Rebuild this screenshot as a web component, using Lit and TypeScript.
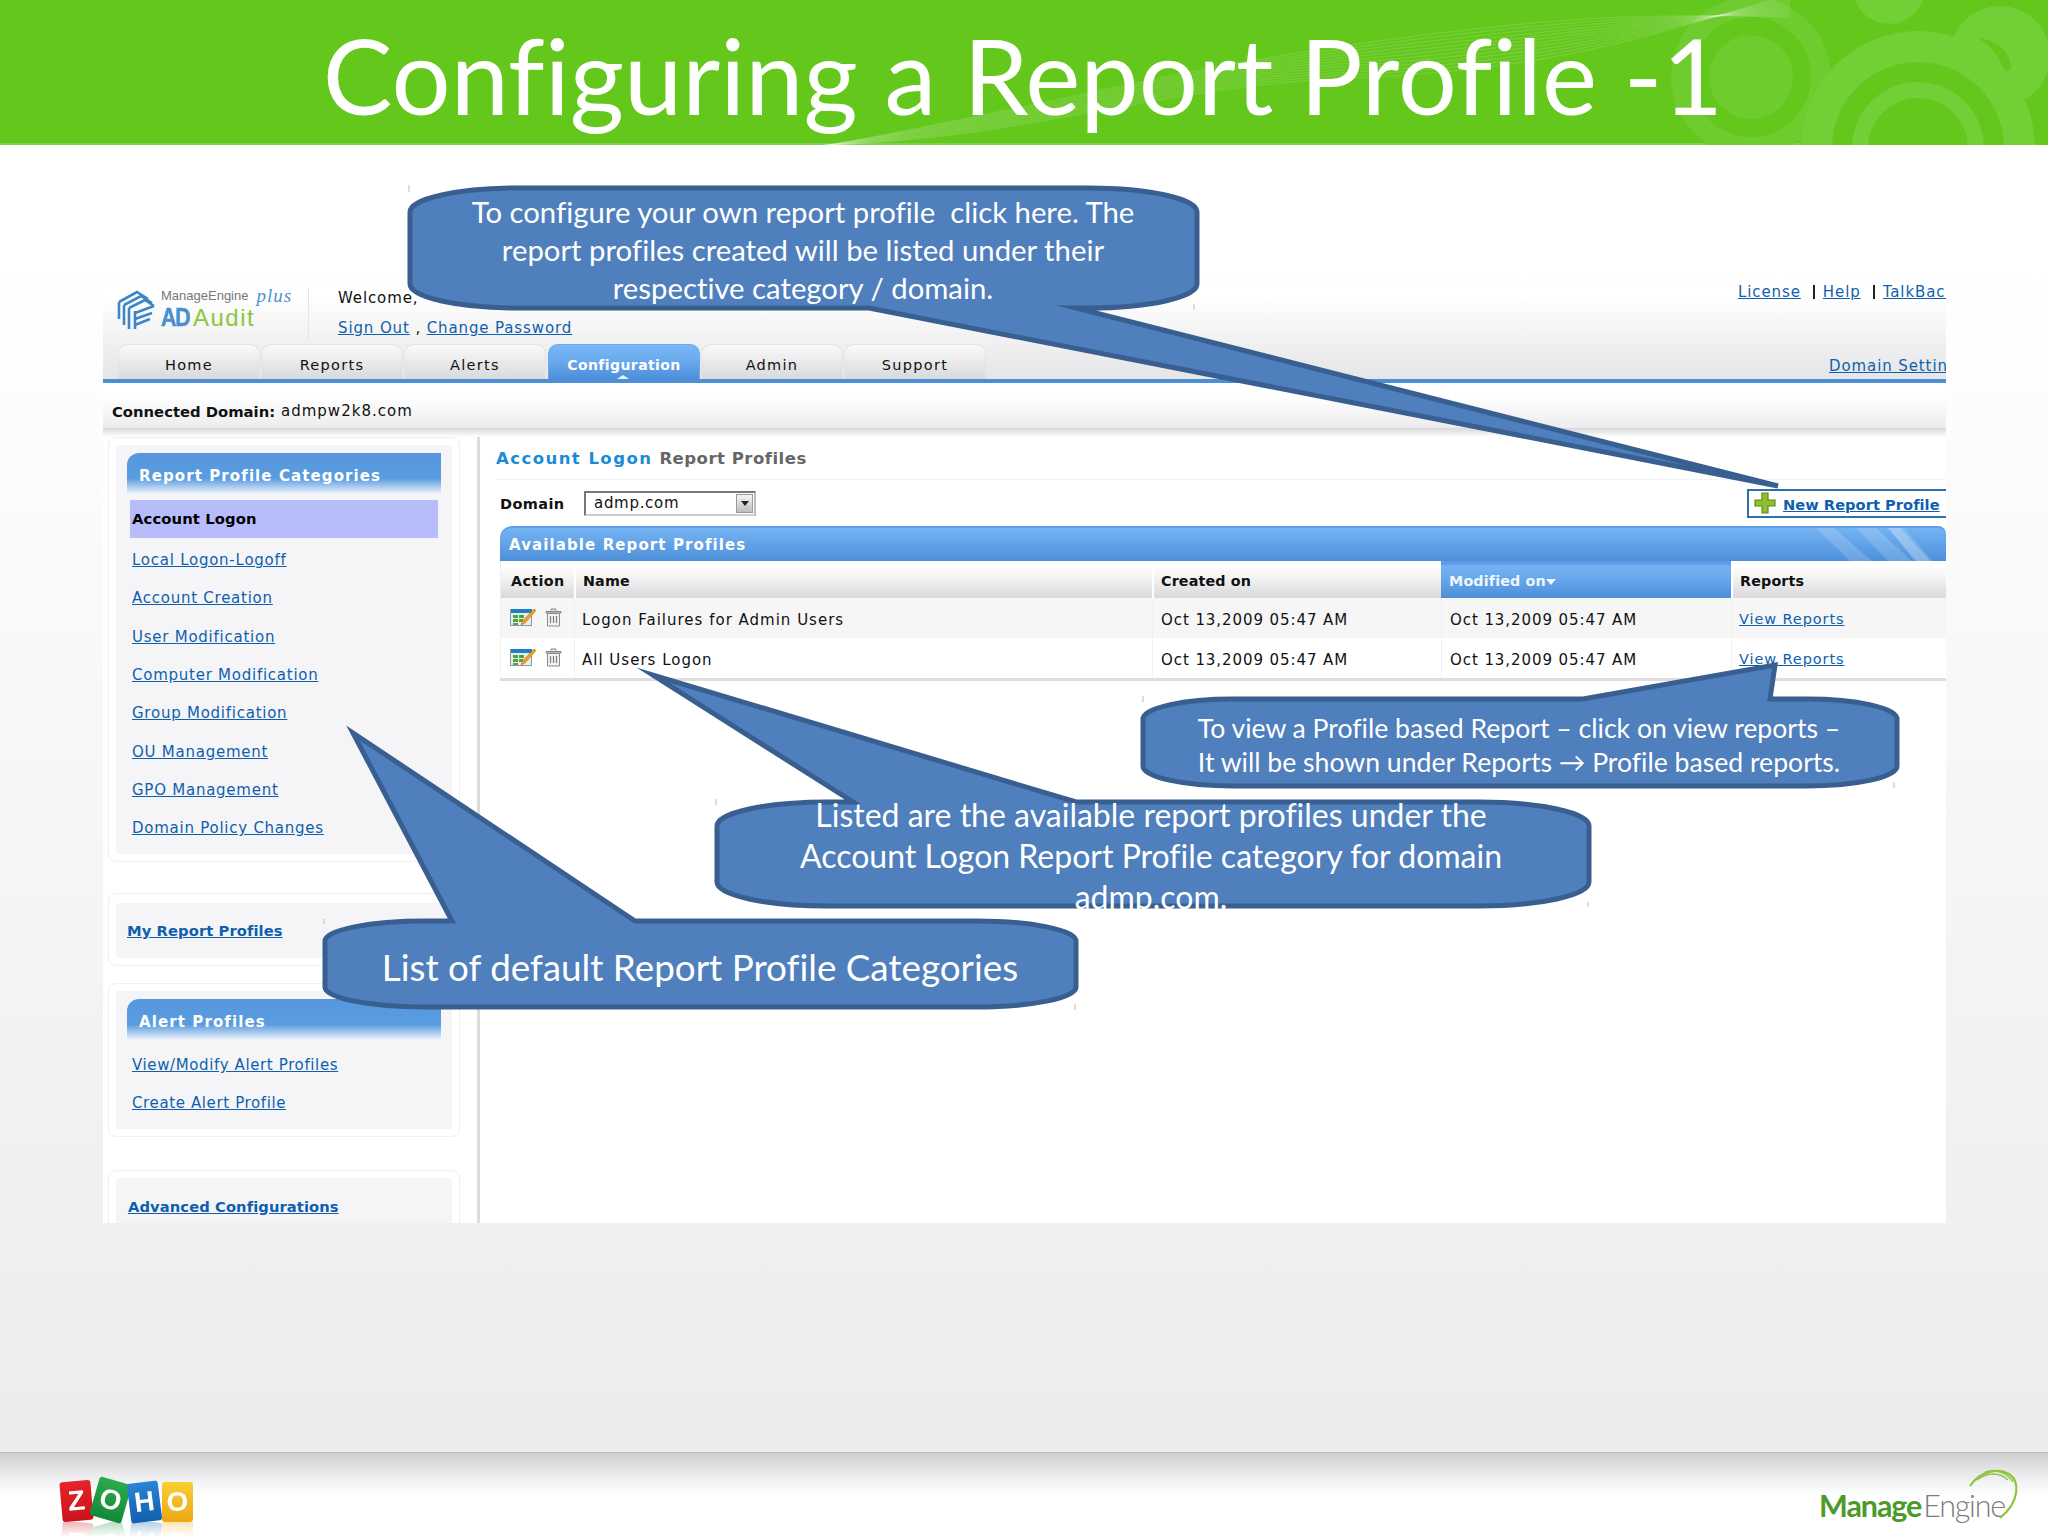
import { LitElement, html, css, svg } from "lit";
import { customElement } from "lit/decorators.js";

type Tail = { edge: "top" | "bottom"; a: number; b: number; tx: number; ty: number };
type Box = { x: number; y: number; w: number; h: number; rx: number; ry: number; tail: Tail; ticks: number[][] };

const CALLOUTS: Box[] = [
  { x: 410, y: 188, w: 787, h: 120, rx: 108, ry: 24, tail: { edge: "bottom", a: 1076, b: 869, tx: 1778, ty: 486 }, ticks: [[409, 185, 192], [1194, 304, 310]] },
  { x: 1143, y: 699, w: 754, h: 87, rx: 90, ry: 20, tail: { edge: "top", a: 1583, b: 1770, tx: 1775, ty: 665 }, ticks: [[1143, 696, 702], [1894, 782, 788]] },
  { x: 717, y: 802, w: 872, h: 104, rx: 110, ry: 24, tail: { edge: "top", a: 853, b: 1076, tx: 653, ty: 675 }, ticks: [[716, 799, 805], [1588, 902, 907]] },
  { x: 325, y: 921, w: 751, h: 86, rx: 100, ry: 20, tail: { edge: "top", a: 452, b: 635, tx: 353, ty: 733 }, ticks: [[324, 919, 924], [1075, 1004, 1010]] },
];

function calloutPath(c: Box): string {
  const { x, y, w, h, rx, ry, tail: t } = c;
  const r = x + w, b = y + h;
  const top = t.edge === "top" ? `L${t.a} ${y} L${t.tx} ${t.ty} L${t.b} ${y} ` : "";
  const bottom = t.edge === "bottom" ? `L${t.a} ${b} L${t.tx} ${t.ty} L${t.b} ${b} ` : "";
  return `M${x} ${y + ry} A${rx} ${ry} 0 0 1 ${x + rx} ${y} ${top}L${r - rx} ${y} A${rx} ${ry} 0 0 1 ${r} ${y + ry} L${r} ${b - ry} A${rx} ${ry} 0 0 1 ${r - rx} ${b} ${bottom}L${x + rx} ${b} A${rx} ${ry} 0 0 1 ${x} ${b - ry} Z`;
}

const TABS = ["Home", "Reports", "Alerts", "Configuration", "Admin", "Support"];
const CATEGORIES = ["Local Logon-Logoff", "Account Creation", "User Modification", "Computer Modification", "Group Modification", "OU Management", "GPO Management", "Domain Policy Changes"];
const ROWS = ["Logon Failures for Admin Users", "All Users Logon"];
const STAMP = "Oct 13,2009 05:47 AM";

const editIcon = svg`<svg class="ic" width="26" height="19" viewBox="0 0 26 19"><rect x=".5" y="1.5" width="21" height="16" fill="#e8eef0" stroke="#8a9aa5"/><rect x="1" y="1" width="21" height="4" fill="#1f7fc4"/><path d="M3 7h5v3H3zM9 7h5v3H9zM3 11h5v3H3zM9 11h4v3H9zM3 15h5v2H3z" fill="#4fa43c"/><path d="M24 1l2 1.500L15 15l-4 2 1.500-4z" fill="#f0a020" stroke="#b86f10" stroke-width=".6"/></svg>`;
const trashIcon = svg`<svg class="ic" width="17" height="19" viewBox="0 0 17 19"><path d="M6 2.500V1h5v1.500M1 3.500h15v1.500H1z" fill="#d8d8d8" stroke="#888" stroke-width="1"/><path d="M2.500 5.500h12V18h-12z" fill="#f2f2f2" stroke="#8b8b8b"/><path d="M5.500 8v7M8.500 8v7M11.500 8v7" stroke="#7d7d7d" stroke-width="1.200"/></svg>`;

@customElement("app-root")
export class AppRoot extends LitElement {
  static styles = css`
    :host { display: block; width: 2048px; height: 1536px; position: relative; overflow: hidden; font-family: "DejaVu Sans", sans-serif; color: #111; background: #fff; }
    a { color: #0f5fae; text-decoration: underline; }
    .slide { display: flex; flex-direction: column; height: 1536px; }

    .banner { height: 145px; background: #63c71c; position: relative; overflow: hidden; display: flex; justify-content: center; flex: none; box-shadow: inset 0 -2px 0 #7fcf4a; }
    .banner svg { position: absolute; left: 0; top: 0; }
    .banner h1 { position: relative; margin: 0 0 0 -2px; font: 400 104.400px/150px Lato, sans-serif; font-variant-ligatures: none; color: #fff; white-space: nowrap; }

    .mid { flex: 1; padding-top: 140px; background: linear-gradient(#fff 0%, #fff 10%, #ecebee 100%); min-height: 0; }
    .app { margin-left: 103px; width: 1843px; height: 938px; background: #fff; display: flex; flex-direction: column; overflow: hidden; font-size: 15px; letter-spacing: 1px; }
    .chrome { background: linear-gradient(#fff 12%, #e5e5e7 100%); flex: none; }
    .top { height: 59px; display: flex; }
    .logo { width: 191px; margin-left: 14px; height: 52px; margin-top: 3px; border-right: 1px solid #e6e6e6; display: flex; gap: 6px; flex: none; }
    .logo svg { margin-top: 2px; flex: none; }
    .lg-text { display: flex; flex-direction: column; font-family: "Liberation Sans", sans-serif; letter-spacing: 0; margin-top: -3px; }
    .lg-l1 { display: flex; height: 21px; font-size: 13px; color: #777; align-items: center; gap: 8px; white-space: nowrap; }
    .lg-plus { font: italic 19px/21px "Liberation Serif", serif; color: #4a93d6; letter-spacing: 1px; }
    .lg-l2 { display: flex; align-items: center; gap: 7px; font-size: 24px; height: 23px; color: #8cc63f; letter-spacing: 1.500px; }
    .lg-l2 b { color: #4a8fd0; font-size: 25px; font-weight: 700; letter-spacing: -1.500px; width: 25px; display: block; transform: scaleX(.86); transform-origin: left; -webkit-text-stroke: .5px #4a8fd0; }
    .welcome { margin-left: 29px; display: flex; flex-direction: column; gap: 12px; padding-top: 4px; line-height: 18px; letter-spacing: .88px; }
    .toplinks { margin-left: auto; width: 208px; white-space: nowrap; line-height: 14px; height: 16px; display: flex; gap: 8px; letter-spacing: .9px; }
    .toplinks span { border-left: 2px solid #222; height: 14px; margin-left: 4px; }
    .clip { flex: 1; min-width: 0; overflow: hidden; }

    .tabs { display: flex; height: 35px; padding-left: 15px; align-items: flex-end; }
    .tab { width: 142px; height: 35px; margin-right: 1px; padding-top: 5px; box-sizing: border-box; border: 1px solid #e4e4e4; border-bottom: 0; border-radius: 10px 10px 0 0; background: linear-gradient(#fafafa, #f0f0f0 30%, #d9d9db); display: flex; align-items: center; justify-content: center; font-size: 14.500px; letter-spacing: 1.300px; }
    .tab.on { width: 152px; margin-left: 1px; background: linear-gradient(#7ab8f6, #6aaaee 45%, #4c8edb); color: #fff; font-weight: 700; font-size: 14px; letter-spacing: .4px; border-color: #6aa9ea; position: relative; }
    .tab.on::after { content: ""; position: absolute; left: 62px; bottom: -4px; border: 12px solid transparent; border-top: 0; border-bottom: 8px solid #f4f4f6; }
    .domset { margin-left: auto; width: 117px; overflow: hidden; white-space: nowrap; align-self: center; margin-top: 8px; height: 18px; line-height: 18px; letter-spacing: .9px; }
    .blueline { height: 4px; background: #4c8fd8; flex: none; position: relative; }
    .connected { height: 45px; padding-top: 11px; box-sizing: border-box; flex: none; background: linear-gradient(#fff 30%, #ececee 100%); display: flex; align-items: center; padding-left: 9px; font-size: 15px; letter-spacing: 1.020px; white-space: pre; }
    .connected b { letter-spacing: 0; font-size: 14.800px; }
    .shadow { height: 9px; background: linear-gradient(#d8d8da, #fff); flex: none; }

    .body { flex: 1; display: flex; min-height: 0; overflow: hidden; }
    .side { width: 374px; flex: none; padding-left: 5px; box-sizing: border-box; display: flex; flex-direction: column; }
    .panel { width: 352px; box-sizing: border-box; border: 1px solid #efefef; border-radius: 8px; padding: 7px; flex: none; }
    .inner { background: #f5f5f7; height: 100%; box-sizing: border-box; border-radius: 4px; }
    .p1 { height: 425px; }
    .p1 .inner { padding-top: 8px; }
    .p2 { height: 73px; margin-top: 31px; padding: 9px 7px 7px; }
    .p3 { height: 154px; margin-top: 17px; }
    .p3 .inner { padding-top: 8px; }
    .p4 { height: 120px; margin-top: 33px; }
    .boldlink { display: flex; align-items: center; padding-left: 12px; font-weight: 700; font-size: 14.700px; letter-spacing: .1px; }
    .p2 .boldlink { padding-left: 11px; }
    .p4 .boldlink { height: 56px; }
    .shead { margin-left: 11px; width: 314px; height: 41px; border-radius: 12px 0 0 0; background: linear-gradient(#5697dd 0%, #5a9ce0 62%, #f0f5fb 100%); color: #fff; font-weight: 700; display: flex; align-items: center; padding: 4px 0 0 12px; box-sizing: border-box; font-size: 15px; letter-spacing: 1.100px; }
    .sel { margin: 6px 0 0 14px; width: 308px; height: 38px; padding: 0 0 2px 2px; background: #b7bcfb; font-weight: 700; font-size: 14.800px; letter-spacing: .1px; display: flex; align-items: center; box-sizing: border-box; color: #000; }
    .links { margin-top: 3px; display: flex; flex-direction: column; letter-spacing: .75px; }
    .links a { height: 38.300px; display: flex; align-items: center; padding-left: 16px; }
    .p3 .links { margin-top: 6px; letter-spacing: .62px; }

    .vline { width: 3px; background: #dcdcde; flex: none; margin-right: 16px; }
    .main { flex: 1; min-width: 0; }
    .title { height: 43px; box-sizing: border-box; border-bottom: 1px solid #f2f2f2; display: flex; align-items: center; font-weight: 700; font-size: 16.500px; letter-spacing: .5px; gap: 7px; color: #666; padding-top: 1px; white-space: nowrap; }
    .title span { color: #1b8bd8; letter-spacing: 1.450px; }
    .domrow { height: 46px; margin-left: 4px; display: flex; align-items: center; position: relative; }
    .domlabel { width: 84px; font-weight: 700; font-size: 14.500px; letter-spacing: .4px; padding-top: 2px; }
    .select { width: 172px; height: 25px; padding-top: 0; box-sizing: border-box; border: 2px solid #777; border-right-color: #bbb; border-bottom-color: #ccc; display: flex; align-items: center; padding-left: 8px; font-size: 15px; letter-spacing: .7px; line-height: 24px; justify-content: space-between; background: #fff; }
    .arrow { width: 17px; height: 19px; background: linear-gradient(#f5f5f5, #bdbdbd); border: 1px solid #999; box-sizing: border-box; display: flex; align-items: center; justify-content: center; margin-right: 1px; }
    .arrow i { border: 4px solid transparent; border-top: 5px solid #222; border-bottom: 0; }
    .newbtn { margin-left: auto; width: 199px; height: 29px; box-sizing: border-box; border: 2px solid #2f6fad; border-right: 0; display: flex; align-items: center; gap: 7px; padding-left: 5px; font-weight: 700; font-size: 14.600px; letter-spacing: .05px; white-space: nowrap; }
    .newbtn a { padding-top: 2px; }

    .tbl { margin-left: 4px; }
    .tbar { height: 35px; box-sizing: border-box; border-top: 2px solid #5f9de4; border-radius: 12px 8px 0 0; background: linear-gradient(#74b3f3, #4e90da); color: #fff; font-weight: 700; font-size: 15px; letter-spacing: 1.100px; display: flex; align-items: center; padding-left: 9px; position: relative; overflow: hidden; }
    .tbar svg { position: absolute; right: 0; top: 0; }
    .grid { display: grid; grid-template-columns: 74px 578px 289px 290px 1fr; }
    .c { display: flex; align-items: center; padding-left: 7px; border-left: 1px solid #f0f0f0; min-width: 0; white-space: nowrap; box-sizing: border-box; }
    .c:first-child { border-left: 1px solid #eee; }
    .h { height: 37px; padding-top: 2px; background: linear-gradient(#fff 10%, #f3f3f4 45%, #d9d9db); font-weight: 700; font-size: 14.300px; letter-spacing: .15px; border-left: 2px solid #fff; }
    .h:first-child { padding-left: 10px; letter-spacing: .4px; }
    .h.sorted { background: linear-gradient(#5f9be6 0, #5f9be6 3px, #74b2f3 5px, #68a8ec 45%, #4d8ed9); color: #eef6ff; border-left: 0; padding-left: 8px; }
    .sorted i { border: 5px solid transparent; border-top: 6px solid #eef6ff; border-bottom: 0; margin-top: 2px; }
    .d { height: 40px; padding-top: 3px; font-size: 15px; letter-spacing: 1px; }
    .odd { background: #f6f6f7; }
    .acts { gap: 9px; padding: 0 0 2px 9px; }
    .ic { flex: none; }
    .date { letter-spacing: .92px; padding-left: 8px; }
    .vr { font-size: 14.500px; letter-spacing: .9px; padding-top: 2px; }
    .tend { height: 3px; background: #dedee0; }

    .foot { height: 84px; flex: none; border-top: 1px solid #bdbdc0; box-sizing: border-box; background: linear-gradient(#cfcfd1 0, #ecebee 22px, #fff 42px); display: flex; justify-content: space-between; position: relative; }
    .zoho { display: flex; margin: 26px 0 0 61px; gap: 2px; height: 42px; -webkit-box-reflect: below 1px linear-gradient(transparent 62%, rgba(255,255,255,.3)); }
    .z { width: 31px; height: 40px; border-radius: 3px; display: flex; align-items: center; justify-content: center; color: #fff; font: 700 28px "Liberation Sans", sans-serif; letter-spacing: 0; }
    .z1 { background: linear-gradient(#e6232a, #c8141c); transform: rotate(-5deg); margin-top: 2px; }
    .z2 { background: linear-gradient(#2ea94d, #12893a); transform: rotate(16deg); width: 33px; margin-top: 1px; }
    .z3 { background: linear-gradient(#2a84d6, #1160ad); transform: rotate(-7deg); margin-top: 3px; }
    .z4 { background: linear-gradient(#f8cf33, #eda714); margin-top: 3px; }
    .me { position: relative; margin: 29px 43px 0 0; height: 46px; display: flex; align-items: flex-end; white-space: nowrap; font-family: Lato, sans-serif; font-size: 30.500px; line-height: 46px; }
    .me b { color: #4c9a2a; letter-spacing: -1.100px; font-weight: 700; }
    .me span { color: #7b7b7b; font-weight: 300; letter-spacing: -1.200px; margin-left: 2px; }
    .me svg { position: absolute; right: -16px; top: -16px; }

    .overlay { position: absolute; left: 0; top: 0; pointer-events: none; }
    .ct { position: absolute; color: #fff; font-family: Lato, sans-serif; font-variant-ligatures: none; text-align: center; white-space: pre; }
    .ct1 { left: 408px; top: 193px; width: 790px; font-size: 29.300px; line-height: 37.800px; }
    .ct2 { left: 1143px; top: 711px; width: 752px; font-size: 26.600px; line-height: 34px; }
    .ct3 { left: 716px; top: 794px; width: 870px; font-size: 32px; line-height: 41px; }
    .ct4 { left: 325px; top: 944px; width: 750px; font-size: 36.800px; line-height: 46px; }
  `;

  private banner() {
    const c = "#73cf36";
    const g = "#63c71c";
    return svg`<svg width="2048" height="145" viewBox="0 0 2048 145">
      <circle cx="1751" cy="77" r="80" fill="#6ecc2e"/>
      <circle cx="1751" cy="77" r="60" fill="${g}"/>
      <circle cx="1751" cy="77" r="42" fill="#6ecc2e"/>
      <g fill="none" stroke="#fff" stroke-opacity=".12" stroke-width="1.500">
        ${[0, 1, 2, 3, 4, 5, 6, 7, 8, 9, 10, 11].map((i) => svg`<path d="M760 ${146 + i} C1000 ${150 - i * 3} 1150 ${85 - i} 1350 ${78 - i * 3} S1650 ${35 - i * 2} 1790 ${-5 + i * 2}"/>`)}
      </g>
      <circle cx="1889" cy="-12" r="36" fill="${c}"/>
      <circle cx="2000" cy="56" r="50" fill="${c}"/>
      <path d="M1977 38a36 30 0 0 1 34 30l-6 6q-6-24-28-36z" fill="${g}"/>
      <circle cx="1918" cy="148" r="117" fill="${c}"/>
      <circle cx="1918" cy="148" r="86" fill="${g}"/>
      <circle cx="1918" cy="148" r="66" fill="${c}"/>
      <circle cx="1918" cy="148" r="50" fill="${g}"/>
      <path d="M2030 105l30 25v20h-24q0-25-6-45z" fill="${g}"/>
    </svg>`;
  }

  private overlay() {
    return svg`<svg class="overlay" width="2048" height="1536" viewBox="0 0 2048 1536">
      ${CALLOUTS.map((c) => svg`<path d="${calloutPath(c)}" fill="#4f7fbc" stroke="#385f90" stroke-width="5" stroke-linejoin="miter" stroke-miterlimit="12"/>`)}
      ${CALLOUTS.flatMap((c) => c.ticks.map((t) => svg`<path d="M${t[0]} ${t[1]}V${t[2]}" stroke="#bbb" stroke-width="1"/>`))}
    </svg>`;
  }

  render() {
    return html`<div class="slide">
      <div class="banner">${this.banner()}<h1>Configuring a Report Profile -1</h1></div>
      <div class="mid">
        <div class="app">
          <div class="chrome">
            <div class="top">
              <div class="logo">
                <svg width="38" height="40" viewBox="0 0 38 40" fill="none" stroke="#3c86c8" stroke-width="2.600">
                  <path d="M2 12L20 2l11 7M7 15L24 6l11 7M12 18L28 10l9 6"/>
                  <path d="M2 12v17M7 15v20M12 18v21"/>
                  <path d="M18 23l19-7M18 29l17-6M18 35l15-6M18 21v18"/>
                </svg>
                <div class="lg-text">
                  <div class="lg-l1">ManageEngine <span class="lg-plus">plus</span></div>
                  <div class="lg-l2"><b>AD</b>Audit</div>
                </div>
              </div>
              <div class="welcome"><div>Welcome,</div><div><a>Sign Out</a> , <a>Change Password</a></div></div>
              <div class="toplinks"><a>License</a><span></span><a>Help</a><span></span><div class="clip"><a>TalkBack</a></div></div>
            </div>
            <div class="tabs">
              ${TABS.map((t) => html`<div class="tab ${t === "Configuration" ? "on" : ""}">${t}</div>`)}
              <a class="domset">Domain Settings</a>
            </div>
          </div>
          <div class="blueline"></div>
          <div class="connected"><b>Connected Domain:</b> admpw2k8.com</div>
          <div class="shadow"></div>
          <div class="body">
            <div class="side">
              <div class="panel p1"><div class="inner">
                <div class="shead">Report Profile Categories</div>
                <div class="sel">Account Logon</div>
                <div class="links">${CATEGORIES.map((c) => html`<a>${c}</a>`)}</div>
              </div></div>
              <div class="panel p2"><div class="inner boldlink"><a>My Report Profiles</a></div></div>
              <div class="panel p3"><div class="inner">
                <div class="shead">Alert Profiles</div>
                <div class="links"><a>View/Modify Alert Profiles</a><a>Create Alert Profile</a></div>
              </div></div>
              <div class="panel p4"><div class="inner boldlink"><a>Advanced Configurations</a></div></div>
            </div>
            <div class="vline"></div>
            <div class="main">
              <div class="title"><span>Account Logon</span> Report Profiles</div>
              <div class="domrow">
                <div class="domlabel">Domain</div>
                <div class="select">admp.com<div class="arrow"><i></i></div></div>
                <div class="newbtn">
                  <svg width="22" height="22" viewBox="0 0 22 22"><path d="M8 1h6v7h7v6h-7v7H8v-7H1V8h7z" fill="#8fc02f" stroke="#5c8a1e" stroke-width="1.200"/></svg>
                  <a>New Report Profile</a>
                </div>
              </div>
              <div class="tbl">
                <div class="tbar">Available Report Profiles
                  <svg width="130" height="35" viewBox="0 0 130 35"><path d="M0 0h18l40 35H36zM40 0h20l38 35H74zM72 0h16l30 35h-18z" fill="#fff" opacity=".16"/><path d="M72 0h12l32 35h-14z" fill="#fff" opacity=".2"/></svg>
                </div>
                <div class="grid">
                  <div class="c h">Action</div><div class="c h">Name</div><div class="c h">Created on</div>
                  <div class="c h sorted">Modified on<i></i></div><div class="c h">Reports</div>
                  ${ROWS.map((r, i) => html`
                    <div class="c d acts ${i === 0 ? "odd" : ""}">${editIcon}${trashIcon}</div>
                    <div class="c d ${i === 0 ? "odd" : ""}">${r}</div>
                    <div class="c d date ${i === 0 ? "odd" : ""}">${STAMP}</div>
                    <div class="c d date ${i === 0 ? "odd" : ""}">${STAMP}</div>
                    <div class="c d vr ${i === 0 ? "odd" : ""}"><a>View Reports</a></div>`)}
                </div>
                <div class="tend"></div>
              </div>
            </div>
          </div>
        </div>
      </div>
      <div class="foot">
        <div class="zoho"><div class="z z1">Z</div><div class="z z2">O</div><div class="z z3">H</div><div class="z z4">O</div></div>
        <div class="me"><b>Manage</b><span>Engine</span>
          <svg width="54" height="56" viewBox="0 0 54 56" fill="none" stroke="#8cc63f"><path d="M3 20C12 6 30 1 42 8c11 7 11 28-9 44" stroke-width="2.200"/><path d="M10 14C20 6 33 6 41 14" stroke-width="1.400"/><path d="M18 6c10-3 22 0 28 10" stroke-width="1.400"/></svg>
        </div>
      </div>
    </div>
    ${this.overlay()}
    <div class="ct ct1">To configure your own report profile  click here. The
report profiles created will be listed under their
respective category / domain.</div>
    <div class="ct ct2">To view a Profile based Report – click on view reports –
It will be shown under Reports → Profile based reports.</div>
    <div class="ct ct3">Listed are the available report profiles under the
Account Logon Report Profile category for domain
admp.com.</div>
    <div class="ct ct4">List of default Report Profile Categories</div>`;
  }
}
